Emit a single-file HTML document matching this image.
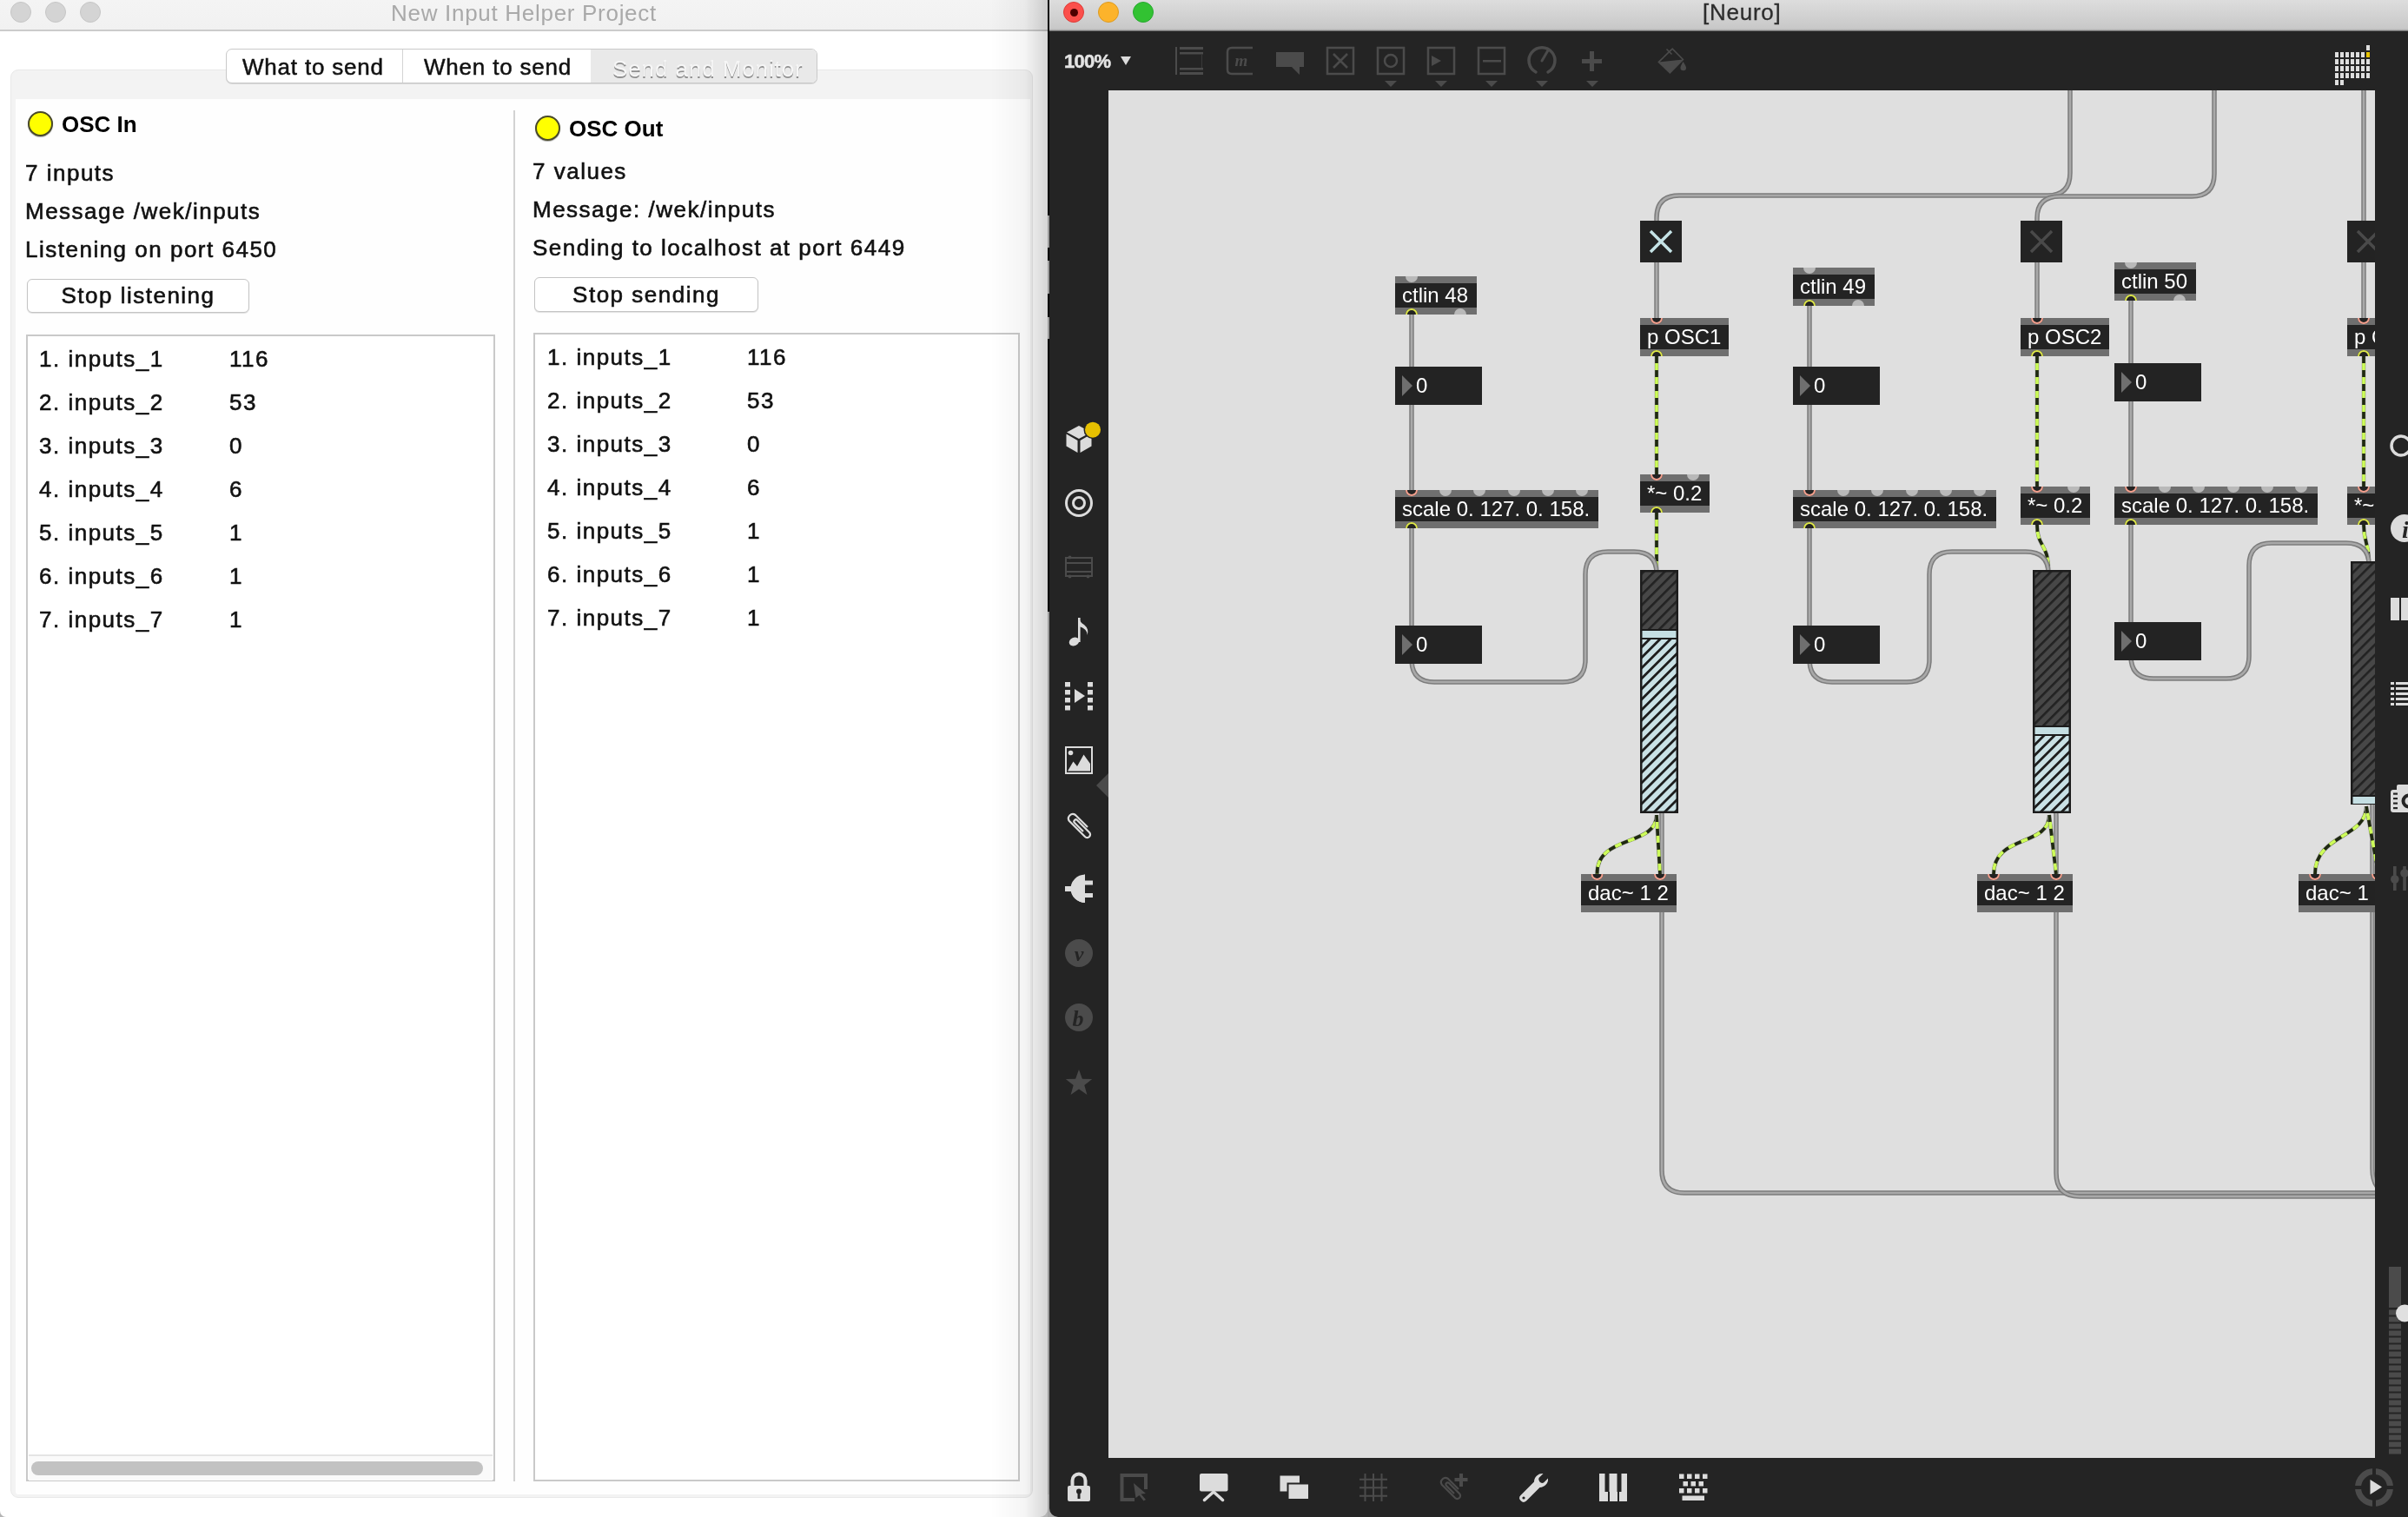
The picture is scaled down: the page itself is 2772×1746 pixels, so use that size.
<!DOCTYPE html><html><head><meta charset="utf-8"><style>
*{margin:0;padding:0;box-sizing:content-box}
html,body{width:2772px;height:1746px;overflow:hidden;background:#fff}
body{position:relative;font-family:"Liberation Sans",sans-serif}
svg,.lt{will-change:transform}
.lt{font-family:"Liberation Sans",sans-serif;white-space:pre}
.b{font-size:26px;line-height:40px;height:40px;color:#111;letter-spacing:1.5px;-webkit-text-stroke:0.6px #111}
</style></head><body>
<div style="position:absolute;left:0;top:0;width:1206px;height:1746px;background:#b4b4b4"></div><div style="position:absolute;left:0;top:0;width:1206px;height:1746px;background:#fff;overflow:hidden;border-bottom-right-radius:9px;border-bottom-left-radius:7px"><div style="position:absolute;left:0;top:0;width:1206px;height:34px;background:linear-gradient(#f4f4f4,#f1f1f1);border-bottom:2px solid #cbcbcb"></div><div style="position:absolute;left:12px;top:2px;width:22px;height:22px;border-radius:50%;background:#d4d4d4;border:1px solid #c6c6c6"></div><div style="position:absolute;left:52px;top:2px;width:22px;height:22px;border-radius:50%;background:#d4d4d4;border:1px solid #c6c6c6"></div><div style="position:absolute;left:92px;top:2px;width:22px;height:22px;border-radius:50%;background:#d4d4d4;border:1px solid #c6c6c6"></div><div class="lt" style="position:absolute;left:0;width:1206px;top:0;height:35px;line-height:30px;text-align:center;color:#a9a9a9;font-size:26px;letter-spacing:0.7px">New Input Helper Project</div><div style="position:absolute;left:12px;top:80px;width:1175px;height:1642px;border:1px solid #e8e8e8;border-radius:9px;background:#f3f3f3"></div><div style="position:absolute;left:18px;top:114px;width:1168px;height:1606px;background:#fefefe;border-bottom-left-radius:3px;border-bottom-right-radius:3px"></div><div style="position:absolute;left:260px;top:56px;width:679px;height:38px;border:1px solid #c9c9c9;border-radius:7px;background:#fff;box-shadow:0 1px 0 #d8d8d8;overflow:hidden"><div style="position:absolute;left:202px;top:0;width:1px;height:38px;background:#d4d4d4"></div><div style="position:absolute;left:419px;top:0;width:260px;height:38px;background:#e9e9e9"></div><div class="lt" style="position:absolute;left:18px;top:0;top:1px;line-height:38px;font-size:26px;color:#111;letter-spacing:0.8px;-webkit-text-stroke:0.5px #111">What to send</div><div class="lt" style="position:absolute;left:227px;top:0;top:1px;line-height:38px;font-size:26px;color:#111;letter-spacing:0.8px;-webkit-text-stroke:0.5px #111">When to send</div><div class="lt" style="position:absolute;left:444px;top:3px;line-height:38px;font-size:26px;color:#f6f6f6;letter-spacing:0.9px;text-shadow:0 1.5px 0.5px #8f8f8f">Send and Monitor</div></div><div style="position:absolute;left:591px;top:127px;width:2px;height:1578px;background:#d2d2d2"></div><div style="position:absolute;left:32px;top:128px;width:25px;height:25px;border-radius:50%;background:#ffff00;border:2px solid #4a4a2a;box-shadow:0 1px 1px rgba(0,0,0,0.3)"></div><div class="lt" style="position:absolute;left:71px;top:123px;height:40px;line-height:40px;font-size:26px;font-weight:bold;color:#000">OSC In</div><div class="lt b" style="position:absolute;left:29px;top:179px">7 inputs</div><div class="lt b" style="position:absolute;left:29px;top:223px">Message /wek/inputs</div><div class="lt b" style="position:absolute;left:29px;top:267px">Listening on port 6450</div><div style="position:absolute;left:31px;top:321px;width:254px;height:37px;border:1px solid #c4c4c4;border-radius:6px;background:#fff;box-shadow:0 1px 1px rgba(0,0,0,0.12)"></div><div class="lt b" style="position:absolute;left:31px;width:256px;text-align:center;top:320px">Stop listening</div><div style="position:absolute;left:30px;top:385px;width:535.5px;height:1316px;border:2px solid #c9c9c9;background:#fff"></div><div class="lt b" style="position:absolute;left:45px;top:393px">1. inputs_1</div><div class="lt b" style="position:absolute;left:264px;top:393px">116</div><div class="lt b" style="position:absolute;left:45px;top:443px">2. inputs_2</div><div class="lt b" style="position:absolute;left:264px;top:443px">53</div><div class="lt b" style="position:absolute;left:45px;top:493px">3. inputs_3</div><div class="lt b" style="position:absolute;left:264px;top:493px">0</div><div class="lt b" style="position:absolute;left:45px;top:543px">4. inputs_4</div><div class="lt b" style="position:absolute;left:264px;top:543px">6</div><div class="lt b" style="position:absolute;left:45px;top:593px">5. inputs_5</div><div class="lt b" style="position:absolute;left:264px;top:593px">1</div><div class="lt b" style="position:absolute;left:45px;top:643px">6. inputs_6</div><div class="lt b" style="position:absolute;left:264px;top:643px">1</div><div class="lt b" style="position:absolute;left:45px;top:693px">7. inputs_7</div><div class="lt b" style="position:absolute;left:264px;top:693px">1</div><div style="position:absolute;left:33px;top:1674px;width:533.5px;height:28px;background:#fafafa;border-top:2px solid #e4e4e4"></div><div style="position:absolute;left:36px;top:1682px;width:520px;height:16px;border-radius:8px;background:#c2c2c2"></div><div style="position:absolute;left:616px;top:133px;width:25px;height:25px;border-radius:50%;background:#ffff00;border:2px solid #4a4a2a;box-shadow:0 1px 1px rgba(0,0,0,0.3)"></div><div class="lt" style="position:absolute;left:655px;top:128px;height:40px;line-height:40px;font-size:26px;font-weight:bold;color:#000">OSC Out</div><div class="lt b" style="position:absolute;left:613px;top:177px">7 values</div><div class="lt b" style="position:absolute;left:613px;top:221px">Message: /wek/inputs</div><div class="lt b" style="position:absolute;left:613px;top:265px">Sending to localhost at port 6449</div><div style="position:absolute;left:615px;top:319px;width:256px;height:38px;border:1px solid #c4c4c4;border-radius:6px;background:#fff;box-shadow:0 1px 1px rgba(0,0,0,0.12)"></div><div class="lt b" style="position:absolute;left:615px;width:258px;text-align:center;top:319px">Stop sending</div><div style="position:absolute;left:614px;top:382.5px;width:556px;height:1318.5px;border:2px solid #c9c9c9;background:#fff"></div><div class="lt b" style="position:absolute;left:630px;top:391px">1. inputs_1</div><div class="lt b" style="position:absolute;left:860px;top:391px">116</div><div class="lt b" style="position:absolute;left:630px;top:441px">2. inputs_2</div><div class="lt b" style="position:absolute;left:860px;top:441px">53</div><div class="lt b" style="position:absolute;left:630px;top:491px">3. inputs_3</div><div class="lt b" style="position:absolute;left:860px;top:491px">0</div><div class="lt b" style="position:absolute;left:630px;top:541px">4. inputs_4</div><div class="lt b" style="position:absolute;left:860px;top:541px">6</div><div class="lt b" style="position:absolute;left:630px;top:591px">5. inputs_5</div><div class="lt b" style="position:absolute;left:860px;top:591px">1</div><div class="lt b" style="position:absolute;left:630px;top:641px">6. inputs_6</div><div class="lt b" style="position:absolute;left:860px;top:641px">1</div><div class="lt b" style="position:absolute;left:630px;top:691px">7. inputs_7</div><div class="lt b" style="position:absolute;left:860px;top:691px">1</div><div style="position:absolute;left:1140px;top:0;width:66px;height:1746px;background:linear-gradient(90deg,rgba(0,0,0,0),rgba(0,0,0,0.04) 60%,rgba(0,0,0,0.16))"></div></div>
<div style="position:absolute;left:1206px;top:0;width:2px;height:1746px;background:linear-gradient(#050505 248px,#9c9c9c 248px,#9c9c9c 285px,#050505 285px,#050505 300px,#9c9c9c 300px,#9c9c9c 338px,#050505 338px,#050505 365px,#9c9c9c 365px,#9c9c9c 390px,#050505 390px,#050505 704px,#9c9c9c 704px)"></div><div style="position:absolute;left:1208px;top:0;width:1564px;height:36px;background:linear-gradient(#dddddd,#c8c8c8 33px,#a6a6a6 35px,#333 36px)"></div><div style="position:absolute;left:1224px;top:2px;width:22px;height:22px;border-radius:50%;background:#fb4f4b;border:1px solid #de3b37"></div><div style="position:absolute;left:1264px;top:2px;width:22px;height:22px;border-radius:50%;background:#fcb32b;border:1px solid #dd9a1f"></div><div style="position:absolute;left:1304px;top:2px;width:22px;height:22px;border-radius:50%;background:#32c232;border:1px solid #26a92f"></div><div style="position:absolute;left:1231.5px;top:9.5px;width:9px;height:9px;border-radius:50%;background:#4d0000"></div><div class="lt" style="position:absolute;left:1960px;top:0;height:36px;line-height:29px;color:#2d2d2d;font-size:26px;letter-spacing:0.75px;-webkit-text-stroke:0.3px #2d2d2d">[Neuro]</div><div style="position:absolute;left:1206px;top:1720px;width:30px;height:26px;background:#a8a8a8"></div><div style="position:absolute;left:1208px;top:36px;width:1564px;height:1710px;background:#242424;border-bottom-left-radius:10px"></div><svg style="position:absolute;left:0;top:0" width="2772" height="1746" viewBox="0 0 2772 1746"><defs><clipPath id="cc"><rect x="1276" y="104" width="1458" height="1574"/></clipPath><pattern id="hatchD" width="8.5" height="14" patternUnits="userSpaceOnUse" patternTransform="rotate(45)"><rect width="14" height="14" fill="#474747"/><rect x="0" y="0" width="2.6" height="14" fill="#222"/></pattern><pattern id="hatchL" width="8.5" height="14" patternUnits="userSpaceOnUse" patternTransform="rotate(45)"><rect width="14" height="14" fill="#c9e1e5"/><rect x="0" y="0" width="2.8" height="14" fill="#1c1c1c"/></pattern></defs><g clip-path="url(#cc)"><rect x="1276" y="104" width="1458" height="1574" fill="#dfdfdf"/><path d="M1625,362 L1625,422" fill="none" stroke="#7c7c7c" stroke-width="5.5"/><path d="M1625,362 L1625,422" fill="none" stroke="#a9a9a9" stroke-width="2.5"/><path d="M1625,466 L1625,564" fill="none" stroke="#7c7c7c" stroke-width="5.5"/><path d="M1625,466 L1625,564" fill="none" stroke="#a9a9a9" stroke-width="2.5"/><path d="M1625,608 L1625,720" fill="none" stroke="#7c7c7c" stroke-width="5.5"/><path d="M1625,608 L1625,720" fill="none" stroke="#a9a9a9" stroke-width="2.5"/><path d="M1907,660 L1913,940 L1913,1347 Q1913,1373 1939,1373 L2740,1373" fill="none" stroke="#7c7c7c" stroke-width="5.5"/><path d="M1907,660 L1913,940 L1913,1347 Q1913,1373 1939,1373 L2740,1373" fill="none" stroke="#a9a9a9" stroke-width="2.5"/><path d="M1907,254 L1907,251 Q1907,225 1933,225 L2357,225 Q2383,225 2383,199 L2383,100" fill="none" stroke="#7c7c7c" stroke-width="5.5"/><path d="M1907,254 L1907,251 Q1907,225 1933,225 L2357,225 Q2383,225 2383,199 L2383,100" fill="none" stroke="#a9a9a9" stroke-width="2.5"/><path d="M1907,302 L1907,366" fill="none" stroke="#7c7c7c" stroke-width="5.5"/><path d="M1907,302 L1907,366" fill="none" stroke="#a9a9a9" stroke-width="2.5"/><path d="M2083,352 L2083,422" fill="none" stroke="#7c7c7c" stroke-width="5.5"/><path d="M2083,352 L2083,422" fill="none" stroke="#a9a9a9" stroke-width="2.5"/><path d="M2083,466 L2083,564" fill="none" stroke="#7c7c7c" stroke-width="5.5"/><path d="M2083,466 L2083,564" fill="none" stroke="#a9a9a9" stroke-width="2.5"/><path d="M2083,608 L2083,720" fill="none" stroke="#7c7c7c" stroke-width="5.5"/><path d="M2083,608 L2083,720" fill="none" stroke="#a9a9a9" stroke-width="2.5"/><path d="M2358,660 L2367,940 L2367,1350 Q2367,1377 2394,1377 L2740,1377" fill="none" stroke="#7c7c7c" stroke-width="5.5"/><path d="M2358,660 L2367,940 L2367,1350 Q2367,1377 2394,1377 L2740,1377" fill="none" stroke="#a9a9a9" stroke-width="2.5"/><path d="M2345,254 L2345,251 Q2345,226 2371,226 L2523,226 Q2549,226 2549,200 L2549,100" fill="none" stroke="#7c7c7c" stroke-width="5.5"/><path d="M2345,254 L2345,251 Q2345,226 2371,226 L2523,226 Q2549,226 2549,200 L2549,100" fill="none" stroke="#a9a9a9" stroke-width="2.5"/><path d="M2345,302 L2345,366" fill="none" stroke="#7c7c7c" stroke-width="5.5"/><path d="M2345,302 L2345,366" fill="none" stroke="#a9a9a9" stroke-width="2.5"/><path d="M2453,346 L2453,418" fill="none" stroke="#7c7c7c" stroke-width="5.5"/><path d="M2453,346 L2453,418" fill="none" stroke="#a9a9a9" stroke-width="2.5"/><path d="M2453,462 L2453,560" fill="none" stroke="#7c7c7c" stroke-width="5.5"/><path d="M2453,462 L2453,560" fill="none" stroke="#a9a9a9" stroke-width="2.5"/><path d="M2453,604 L2453,716" fill="none" stroke="#7c7c7c" stroke-width="5.5"/><path d="M2453,604 L2453,716" fill="none" stroke="#a9a9a9" stroke-width="2.5"/><path d="M2727,650 L2731,930 L2731,1345 Q2731,1375 2760,1375" fill="none" stroke="#7c7c7c" stroke-width="5.5"/><path d="M2727,650 L2731,930 L2731,1345 Q2731,1375 2760,1375" fill="none" stroke="#a9a9a9" stroke-width="2.5"/><path d="M2721,254 L2721,100" fill="none" stroke="#7c7c7c" stroke-width="5.5"/><path d="M2721,254 L2721,100" fill="none" stroke="#a9a9a9" stroke-width="2.5"/><path d="M2721,302 L2721,366" fill="none" stroke="#7c7c7c" stroke-width="5.5"/><path d="M2721,302 L2721,366" fill="none" stroke="#a9a9a9" stroke-width="2.5"/><path d="M1907,410 L1907,546" fill="none" stroke="#b0b0b0" stroke-width="4.8"/><path d="M1907,410 L1907,546" fill="none" stroke="#1f2910" stroke-width="3.7"/><path d="M1907,410 L1907,546" fill="none" stroke="#cdfc5a" stroke-width="3.7" stroke-dasharray="8 8" stroke-dashoffset="8"/><path d="M1907,590 L1907,656" fill="none" stroke="#b0b0b0" stroke-width="4.8"/><path d="M1907,590 L1907,656" fill="none" stroke="#1f2910" stroke-width="3.7"/><path d="M1907,590 L1907,656" fill="none" stroke="#cdfc5a" stroke-width="3.7" stroke-dasharray="8 8" stroke-dashoffset="8"/><path d="M1907,938 C1907,975 1838,960 1838.5,1006" fill="none" stroke="#b0b0b0" stroke-width="4.8"/><path d="M1907,938 C1907,975 1838,960 1838.5,1006" fill="none" stroke="#1f2910" stroke-width="3.7"/><path d="M1907,938 C1907,975 1838,960 1838.5,1006" fill="none" stroke="#cdfc5a" stroke-width="3.7" stroke-dasharray="8 8" stroke-dashoffset="8"/><path d="M1907,938 L1911,1006" fill="none" stroke="#b0b0b0" stroke-width="4.8"/><path d="M1907,938 L1911,1006" fill="none" stroke="#1f2910" stroke-width="3.7"/><path d="M1907,938 L1911,1006" fill="none" stroke="#cdfc5a" stroke-width="3.7" stroke-dasharray="8 8" stroke-dashoffset="8"/><path d="M2345,410 L2345,560" fill="none" stroke="#b0b0b0" stroke-width="4.8"/><path d="M2345,410 L2345,560" fill="none" stroke="#1f2910" stroke-width="3.7"/><path d="M2345,410 L2345,560" fill="none" stroke="#cdfc5a" stroke-width="3.7" stroke-dasharray="8 8" stroke-dashoffset="8"/><path d="M2345,604 C2345,630 2358,625 2358,656" fill="none" stroke="#b0b0b0" stroke-width="4.8"/><path d="M2345,604 C2345,630 2358,625 2358,656" fill="none" stroke="#1f2910" stroke-width="3.7"/><path d="M2345,604 C2345,630 2358,625 2358,656" fill="none" stroke="#cdfc5a" stroke-width="3.7" stroke-dasharray="8 8" stroke-dashoffset="8"/><path d="M2359,938 C2359,975 2295,960 2295,1006" fill="none" stroke="#b0b0b0" stroke-width="4.8"/><path d="M2359,938 C2359,975 2295,960 2295,1006" fill="none" stroke="#1f2910" stroke-width="3.7"/><path d="M2359,938 C2359,975 2295,960 2295,1006" fill="none" stroke="#cdfc5a" stroke-width="3.7" stroke-dasharray="8 8" stroke-dashoffset="8"/><path d="M2359,938 L2367,1006" fill="none" stroke="#b0b0b0" stroke-width="4.8"/><path d="M2359,938 L2367,1006" fill="none" stroke="#1f2910" stroke-width="3.7"/><path d="M2359,938 L2367,1006" fill="none" stroke="#cdfc5a" stroke-width="3.7" stroke-dasharray="8 8" stroke-dashoffset="8"/><path d="M2721,410 L2721,560" fill="none" stroke="#b0b0b0" stroke-width="4.8"/><path d="M2721,410 L2721,560" fill="none" stroke="#1f2910" stroke-width="3.7"/><path d="M2721,410 L2721,560" fill="none" stroke="#cdfc5a" stroke-width="3.7" stroke-dasharray="8 8" stroke-dashoffset="8"/><path d="M2721,604 C2721,625 2727,625 2727,646" fill="none" stroke="#b0b0b0" stroke-width="4.8"/><path d="M2721,604 C2721,625 2727,625 2727,646" fill="none" stroke="#1f2910" stroke-width="3.7"/><path d="M2721,604 C2721,625 2727,625 2727,646" fill="none" stroke="#cdfc5a" stroke-width="3.7" stroke-dasharray="8 8" stroke-dashoffset="8"/><path d="M2724,928 C2724,965 2665,960 2665,1006" fill="none" stroke="#b0b0b0" stroke-width="4.8"/><path d="M2724,928 C2724,965 2665,960 2665,1006" fill="none" stroke="#1f2910" stroke-width="3.7"/><path d="M2724,928 C2724,965 2665,960 2665,1006" fill="none" stroke="#cdfc5a" stroke-width="3.7" stroke-dasharray="8 8" stroke-dashoffset="8"/><path d="M2724,928 L2738,1006" fill="none" stroke="#b0b0b0" stroke-width="4.8"/><path d="M2724,928 L2738,1006" fill="none" stroke="#1f2910" stroke-width="3.7"/><path d="M2724,928 L2738,1006" fill="none" stroke="#cdfc5a" stroke-width="3.7" stroke-dasharray="8 8" stroke-dashoffset="8"/><path d="M1625,764 L1625,759 Q1625,785 1651,785 L1799,785 Q1825,785 1825,759 L1825,661 Q1825,635 1851,635 L1881,635 Q1907,635 1907,660 L1907,660" fill="none" stroke="#7c7c7c" stroke-width="5.5"/><path d="M1625,764 L1625,759 Q1625,785 1651,785 L1799,785 Q1825,785 1825,759 L1825,661 Q1825,635 1851,635 L1881,635 Q1907,635 1907,660 L1907,660" fill="none" stroke="#a9a9a9" stroke-width="2.5"/><path d="M2083,764 L2083,759 Q2083,785 2109,785 L2195,785 Q2221,785 2221,759 L2221,661 Q2221,635 2247,635 L2332,635 Q2358,635 2358,660 L2358,660" fill="none" stroke="#7c7c7c" stroke-width="5.5"/><path d="M2083,764 L2083,759 Q2083,785 2109,785 L2195,785 Q2221,785 2221,759 L2221,661 Q2221,635 2247,635 L2332,635 Q2358,635 2358,660 L2358,660" fill="none" stroke="#a9a9a9" stroke-width="2.5"/><path d="M2453,760 L2453,755 Q2453,781 2479,781 L2563,781 Q2589,781 2589,755 L2589,651 Q2589,625 2615,625 L2701,625 Q2727,625 2727,650 L2727,650" fill="none" stroke="#7c7c7c" stroke-width="5.5"/><path d="M2453,760 L2453,755 Q2453,781 2479,781 L2563,781 Q2589,781 2589,755 L2589,651 Q2589,625 2615,625 L2701,625 Q2727,625 2727,650 L2727,650" fill="none" stroke="#a9a9a9" stroke-width="2.5"/><rect x="1606" y="318" width="94" height="44" fill="#6f6f6f"/><rect x="1606" y="326" width="94" height="28" fill="#232323"/><text x="1614" y="348" fill="#fff" font-size="24" font-family="Liberation Sans">ctlin 48</text><path d="M1618,318 A7,7 0 0 0 1632,318 Z" fill="#b9b9b9"/><path d="M1618,362 A7,7 0 0 1 1632,362 Z" fill="#232323"/><path d="M1619,362 A6,6 0 0 1 1631,362" fill="none" stroke="#dde64a" stroke-width="2"/><path d="M1674,362 A7,7 0 0 1 1688,362 Z" fill="#b9b9b9"/><rect x="1606" y="422" width="100" height="44" fill="#232323"/><path d="M1614,432 L1626,444 L1614,456 Z" fill="#6f6f6f"/><text x="1630" y="452" fill="#fff" font-size="24" font-family="Liberation Sans">0</text><rect x="1606" y="564" width="234" height="44" fill="#6f6f6f"/><rect x="1606" y="572" width="234" height="28" fill="#232323"/><text x="1614" y="594" fill="#fff" font-size="24" font-family="Liberation Sans">scale 0. 127. 0. 158.</text><path d="M1618,564 A7,7 0 0 0 1632,564 Z" fill="#232323"/><path d="M1619,564 A6,6 0 0 0 1631,564" fill="none" stroke="#f3a08e" stroke-width="2"/><path d="M1657,564 A7,7 0 0 0 1671,564 Z" fill="#b9b9b9"/><path d="M1696,564 A7,7 0 0 0 1710,564 Z" fill="#b9b9b9"/><path d="M1736,564 A7,7 0 0 0 1750,564 Z" fill="#b9b9b9"/><path d="M1775,564 A7,7 0 0 0 1789,564 Z" fill="#b9b9b9"/><path d="M1814,564 A7,7 0 0 0 1828,564 Z" fill="#b9b9b9"/><path d="M1618,608 A7,7 0 0 1 1632,608 Z" fill="#232323"/><path d="M1619,608 A6,6 0 0 1 1631,608" fill="none" stroke="#dde64a" stroke-width="2"/><rect x="1606" y="720" width="100" height="44" fill="#232323"/><path d="M1614,730 L1626,742 L1614,754 Z" fill="#6f6f6f"/><text x="1630" y="750" fill="#fff" font-size="24" font-family="Liberation Sans">0</text><rect x="1888" y="254" width="48" height="48" fill="#232323"/><path d="M1900,266 L1924,290 M1924,266 L1900,290" stroke="#c5e3e6" stroke-width="3.5"/><rect x="1888" y="366" width="102" height="44" fill="#6f6f6f"/><rect x="1888" y="374" width="102" height="28" fill="#232323"/><text x="1896" y="396" fill="#fff" font-size="24" font-family="Liberation Sans">p OSC1</text><path d="M1900,366 A7,7 0 0 0 1914,366 Z" fill="#232323"/><path d="M1901,366 A6,6 0 0 0 1913,366" fill="none" stroke="#f3a08e" stroke-width="2"/><path d="M1900,410 A7,7 0 0 1 1914,410 Z" fill="#232323"/><path d="M1901,410 A6,6 0 0 1 1913,410" fill="none" stroke="#dde64a" stroke-width="2"/><rect x="1888" y="546" width="80" height="44" fill="#6f6f6f"/><rect x="1888" y="554" width="80" height="28" fill="#232323"/><text x="1896" y="576" fill="#fff" font-size="24" font-family="Liberation Sans">*~ 0.2</text><path d="M1900,546 A7,7 0 0 0 1914,546 Z" fill="#232323"/><path d="M1901,546 A6,6 0 0 0 1913,546" fill="none" stroke="#f3a08e" stroke-width="2"/><path d="M1942,546 A7,7 0 0 0 1956,546 Z" fill="#b9b9b9"/><path d="M1900,590 A7,7 0 0 1 1914,590 Z" fill="#232323"/><path d="M1901,590 A6,6 0 0 1 1913,590" fill="none" stroke="#dde64a" stroke-width="2"/><rect x="1888" y="656" width="44" height="280" fill="#1c1c1c"/><rect x="1890.5" y="658.5" width="39" height="65.5" fill="url(#hatchD)"/><rect x="1890.5" y="726" width="39" height="8" fill="#c5dfe3"/><rect x="1890.5" y="736" width="39" height="197.5" fill="url(#hatchL)"/><rect x="1820" y="1006" width="110" height="44" fill="#6f6f6f"/><rect x="1820" y="1014" width="110" height="28" fill="#232323"/><text x="1828" y="1036" fill="#fff" font-size="24" font-family="Liberation Sans">dac~ 1 2</text><path d="M1831.5,1006 A7,7 0 0 0 1845.5,1006 Z" fill="#232323"/><path d="M1832.5,1006 A6,6 0 0 0 1844.5,1006" fill="none" stroke="#f3a08e" stroke-width="2"/><path d="M1904,1006 A7,7 0 0 0 1918,1006 Z" fill="#232323"/><path d="M1905,1006 A6,6 0 0 0 1917,1006" fill="none" stroke="#f3a08e" stroke-width="2"/><rect x="2064" y="308" width="94" height="44" fill="#6f6f6f"/><rect x="2064" y="316" width="94" height="28" fill="#232323"/><text x="2072" y="338" fill="#fff" font-size="24" font-family="Liberation Sans">ctlin 49</text><path d="M2076,308 A7,7 0 0 0 2090,308 Z" fill="#b9b9b9"/><path d="M2076,352 A7,7 0 0 1 2090,352 Z" fill="#232323"/><path d="M2077,352 A6,6 0 0 1 2089,352" fill="none" stroke="#dde64a" stroke-width="2"/><path d="M2132,352 A7,7 0 0 1 2146,352 Z" fill="#b9b9b9"/><rect x="2064" y="422" width="100" height="44" fill="#232323"/><path d="M2072,432 L2084,444 L2072,456 Z" fill="#6f6f6f"/><text x="2088" y="452" fill="#fff" font-size="24" font-family="Liberation Sans">0</text><rect x="2064" y="564" width="234" height="44" fill="#6f6f6f"/><rect x="2064" y="572" width="234" height="28" fill="#232323"/><text x="2072" y="594" fill="#fff" font-size="24" font-family="Liberation Sans">scale 0. 127. 0. 158.</text><path d="M2076,564 A7,7 0 0 0 2090,564 Z" fill="#232323"/><path d="M2077,564 A6,6 0 0 0 2089,564" fill="none" stroke="#f3a08e" stroke-width="2"/><path d="M2115,564 A7,7 0 0 0 2129,564 Z" fill="#b9b9b9"/><path d="M2154,564 A7,7 0 0 0 2168,564 Z" fill="#b9b9b9"/><path d="M2194,564 A7,7 0 0 0 2208,564 Z" fill="#b9b9b9"/><path d="M2233,564 A7,7 0 0 0 2247,564 Z" fill="#b9b9b9"/><path d="M2272,564 A7,7 0 0 0 2286,564 Z" fill="#b9b9b9"/><path d="M2076,608 A7,7 0 0 1 2090,608 Z" fill="#232323"/><path d="M2077,608 A6,6 0 0 1 2089,608" fill="none" stroke="#dde64a" stroke-width="2"/><rect x="2064" y="720" width="100" height="44" fill="#232323"/><path d="M2072,730 L2084,742 L2072,754 Z" fill="#6f6f6f"/><text x="2088" y="750" fill="#fff" font-size="24" font-family="Liberation Sans">0</text><rect x="2326" y="254" width="48" height="48" fill="#232323"/><path d="M2338,266 L2362,290 M2362,266 L2338,290" stroke="#4a4a4a" stroke-width="3.5"/><rect x="2326" y="366" width="102" height="44" fill="#6f6f6f"/><rect x="2326" y="374" width="102" height="28" fill="#232323"/><text x="2334" y="396" fill="#fff" font-size="24" font-family="Liberation Sans">p OSC2</text><path d="M2338,366 A7,7 0 0 0 2352,366 Z" fill="#232323"/><path d="M2339,366 A6,6 0 0 0 2351,366" fill="none" stroke="#f3a08e" stroke-width="2"/><path d="M2338,410 A7,7 0 0 1 2352,410 Z" fill="#232323"/><path d="M2339,410 A6,6 0 0 1 2351,410" fill="none" stroke="#dde64a" stroke-width="2"/><rect x="2326" y="560" width="80" height="44" fill="#6f6f6f"/><rect x="2326" y="568" width="80" height="28" fill="#232323"/><text x="2334" y="590" fill="#fff" font-size="24" font-family="Liberation Sans">*~ 0.2</text><path d="M2338,560 A7,7 0 0 0 2352,560 Z" fill="#232323"/><path d="M2339,560 A6,6 0 0 0 2351,560" fill="none" stroke="#f3a08e" stroke-width="2"/><path d="M2380,560 A7,7 0 0 0 2394,560 Z" fill="#b9b9b9"/><path d="M2338,604 A7,7 0 0 1 2352,604 Z" fill="#232323"/><path d="M2339,604 A6,6 0 0 1 2351,604" fill="none" stroke="#dde64a" stroke-width="2"/><rect x="2340" y="656" width="44" height="280" fill="#1c1c1c"/><rect x="2342.5" y="658.5" width="39" height="176.5" fill="url(#hatchD)"/><rect x="2342.5" y="837" width="39" height="8" fill="#c5dfe3"/><rect x="2342.5" y="847" width="39" height="86.5" fill="url(#hatchL)"/><rect x="2276" y="1006" width="110" height="44" fill="#6f6f6f"/><rect x="2276" y="1014" width="110" height="28" fill="#232323"/><text x="2284" y="1036" fill="#fff" font-size="24" font-family="Liberation Sans">dac~ 1 2</text><path d="M2288,1006 A7,7 0 0 0 2302,1006 Z" fill="#232323"/><path d="M2289,1006 A6,6 0 0 0 2301,1006" fill="none" stroke="#f3a08e" stroke-width="2"/><path d="M2360,1006 A7,7 0 0 0 2374,1006 Z" fill="#232323"/><path d="M2361,1006 A6,6 0 0 0 2373,1006" fill="none" stroke="#f3a08e" stroke-width="2"/><rect x="2434" y="302" width="94" height="44" fill="#6f6f6f"/><rect x="2434" y="310" width="94" height="28" fill="#232323"/><text x="2442" y="332" fill="#fff" font-size="24" font-family="Liberation Sans">ctlin 50</text><path d="M2446,302 A7,7 0 0 0 2460,302 Z" fill="#b9b9b9"/><path d="M2446,346 A7,7 0 0 1 2460,346 Z" fill="#232323"/><path d="M2447,346 A6,6 0 0 1 2459,346" fill="none" stroke="#dde64a" stroke-width="2"/><path d="M2502,346 A7,7 0 0 1 2516,346 Z" fill="#b9b9b9"/><rect x="2434" y="418" width="100" height="44" fill="#232323"/><path d="M2442,428 L2454,440 L2442,452 Z" fill="#6f6f6f"/><text x="2458" y="448" fill="#fff" font-size="24" font-family="Liberation Sans">0</text><rect x="2434" y="560" width="234" height="44" fill="#6f6f6f"/><rect x="2434" y="568" width="234" height="28" fill="#232323"/><text x="2442" y="590" fill="#fff" font-size="24" font-family="Liberation Sans">scale 0. 127. 0. 158.</text><path d="M2446,560 A7,7 0 0 0 2460,560 Z" fill="#232323"/><path d="M2447,560 A6,6 0 0 0 2459,560" fill="none" stroke="#f3a08e" stroke-width="2"/><path d="M2485,560 A7,7 0 0 0 2499,560 Z" fill="#b9b9b9"/><path d="M2524,560 A7,7 0 0 0 2538,560 Z" fill="#b9b9b9"/><path d="M2564,560 A7,7 0 0 0 2578,560 Z" fill="#b9b9b9"/><path d="M2603,560 A7,7 0 0 0 2617,560 Z" fill="#b9b9b9"/><path d="M2642,560 A7,7 0 0 0 2656,560 Z" fill="#b9b9b9"/><path d="M2446,604 A7,7 0 0 1 2460,604 Z" fill="#232323"/><path d="M2447,604 A6,6 0 0 1 2459,604" fill="none" stroke="#dde64a" stroke-width="2"/><rect x="2434" y="716" width="100" height="44" fill="#232323"/><path d="M2442,726 L2454,738 L2442,750 Z" fill="#6f6f6f"/><text x="2458" y="746" fill="#fff" font-size="24" font-family="Liberation Sans">0</text><rect x="2702" y="254" width="48" height="48" fill="#232323"/><path d="M2714,266 L2738,290 M2738,266 L2714,290" stroke="#4a4a4a" stroke-width="3.5"/><rect x="2702" y="366" width="102" height="44" fill="#6f6f6f"/><rect x="2702" y="374" width="102" height="28" fill="#232323"/><text x="2710" y="396" fill="#fff" font-size="24" font-family="Liberation Sans">p OSC3</text><path d="M2714,366 A7,7 0 0 0 2728,366 Z" fill="#232323"/><path d="M2715,366 A6,6 0 0 0 2727,366" fill="none" stroke="#f3a08e" stroke-width="2"/><path d="M2714,410 A7,7 0 0 1 2728,410 Z" fill="#232323"/><path d="M2715,410 A6,6 0 0 1 2727,410" fill="none" stroke="#dde64a" stroke-width="2"/><rect x="2702" y="560" width="80" height="44" fill="#6f6f6f"/><rect x="2702" y="568" width="80" height="28" fill="#232323"/><text x="2710" y="590" fill="#fff" font-size="24" font-family="Liberation Sans">*~ 0.2</text><path d="M2714,560 A7,7 0 0 0 2728,560 Z" fill="#232323"/><path d="M2715,560 A6,6 0 0 0 2727,560" fill="none" stroke="#f3a08e" stroke-width="2"/><path d="M2756,560 A7,7 0 0 0 2770,560 Z" fill="#b9b9b9"/><path d="M2714,604 A7,7 0 0 1 2728,604 Z" fill="#232323"/><path d="M2715,604 A6,6 0 0 1 2727,604" fill="none" stroke="#dde64a" stroke-width="2"/><rect x="2706" y="646" width="44" height="280" fill="#1c1c1c"/><rect x="2708.5" y="648.5" width="39" height="266.5" fill="url(#hatchD)"/><rect x="2708.5" y="917" width="39" height="8" fill="#c5dfe3"/><rect x="2708.5" y="927" width="39" height="-3.5" fill="url(#hatchL)"/><rect x="2646" y="1006" width="110" height="44" fill="#6f6f6f"/><rect x="2646" y="1014" width="110" height="28" fill="#232323"/><text x="2654" y="1036" fill="#fff" font-size="24" font-family="Liberation Sans">dac~ 1 2</text><path d="M2658,1006 A7,7 0 0 0 2672,1006 Z" fill="#232323"/><path d="M2659,1006 A6,6 0 0 0 2671,1006" fill="none" stroke="#f3a08e" stroke-width="2"/><path d="M2730,1006 A7,7 0 0 0 2744,1006 Z" fill="#232323"/><path d="M2731,1006 A6,6 0 0 0 2743,1006" fill="none" stroke="#f3a08e" stroke-width="2"/></g></svg><svg style="position:absolute;left:0;top:0" width="2772" height="1746" viewBox="0 0 2772 1746"><text x="1225" y="77.5" fill="#e4e4e4" font-size="22" font-weight="bold" letter-spacing="-0.7" stroke="#e4e4e4" stroke-width="0.5" font-family="Liberation Sans">100%</text><path d="M1290,65 L1302,65 L1296,75 Z" fill="#dcdcdc"/><g fill="#4b4b4b"><rect x="1353" y="54" width="2" height="32"/><rect x="1358" y="54" width="27" height="3"/><rect x="1358" y="60" width="27" height="2.5"/><rect x="1358" y="78" width="27" height="2.5"/><rect x="1358" y="83" width="27" height="3"/><rect x="1383" y="62" width="1" height="16" fill="#383838"/></g><path d="M1442,55 L1418,55 Q1413,55 1413,60 L1413,80 Q1413,85 1418,85 L1442,85" fill="none" stroke="#4b4b4b" stroke-width="2.5"/><text x="1421.5" y="75.5" fill="#4b4b4b" font-size="19" font-style="italic" font-weight="bold" font-family="Liberation Serif">m</text><path d="M1469,60 L1501,60 L1501,77 L1496,77 L1496,86 L1487,77 L1469,77 Z" fill="#4b4b4b"/><rect x="1528" y="55" width="30" height="30" fill="none" stroke="#4b4b4b" stroke-width="2.5"/><path d="M1535,62 L1551,78 M1551,62 L1535,78" stroke="#4b4b4b" stroke-width="2.5"/><rect x="1586" y="55" width="30" height="30" fill="none" stroke="#4b4b4b" stroke-width="2.5"/><circle cx="1601" cy="70" r="7" fill="none" stroke="#4b4b4b" stroke-width="2.5"/><rect x="1644" y="55" width="30" height="30" fill="none" stroke="#4b4b4b" stroke-width="2.5"/><path d="M1648,64 L1659,70 L1648,76 Z" fill="#4b4b4b"/><rect x="1702" y="55" width="30" height="30" fill="none" stroke="#4b4b4b" stroke-width="2.5"/><rect x="1707" y="69" width="21" height="2.5" fill="#4b4b4b"/><path d="M1768,83 A15,15 0 1 1 1782,83" fill="none" stroke="#4b4b4b" stroke-width="3.5" stroke-linecap="round"/><path d="M1775,70 L1782,58" stroke="#4b4b4b" stroke-width="3" stroke-linecap="round"/><rect x="1821" y="68" width="23" height="5" fill="#4b4b4b"/><rect x="1830" y="59" width="5" height="23" fill="#4b4b4b"/><path d="M1594,93 L1608,93 L1601,100 Z" fill="#4b4b4b"/><path d="M1652,93 L1666,93 L1659,100 Z" fill="#4b4b4b"/><path d="M1710,93 L1724,93 L1717,100 Z" fill="#4b4b4b"/><path d="M1768,93 L1782,93 L1775,100 Z" fill="#4b4b4b"/><path d="M1826,93 L1840,93 L1833,100 Z" fill="#4b4b4b"/><path d="M1909.4,71.4 L1925.2,56.2 L1937.4,68.5 L1922.4,83.9 Z" fill="none" stroke="#4b4b4b" stroke-width="1.6"/><path d="M1909.4,71.4 L1937.4,68.5 L1922.4,83.9 Z" fill="#4b4b4b"/><path d="M1918.5,56.5 L1924.5,62.5" stroke="#4b4b4b" stroke-width="1.6"/><path d="M1937.5,71 Q1941,76 1941,78 A3.2,3.2 0 0 1 1934.5,78 Q1934.5,76 1937.5,71 Z" fill="#4b4b4b"/><rect x="2688" y="60" width="4" height="6" fill="#dedede"/><rect x="2694" y="60" width="4" height="6" fill="#dedede"/><rect x="2700" y="60" width="4" height="6" fill="#dedede"/><rect x="2706" y="60" width="4" height="6" fill="#dedede"/><rect x="2712" y="60" width="4" height="6" fill="#dedede"/><rect x="2718" y="60" width="4" height="6" fill="#dedede"/><rect x="2724" y="60" width="4" height="6" fill="#e6c200"/><rect x="2688" y="68" width="4" height="6" fill="#dedede"/><rect x="2694" y="68" width="4" height="6" fill="#dedede"/><rect x="2700" y="68" width="4" height="6" fill="#dedede"/><rect x="2706" y="68" width="4" height="6" fill="#dedede"/><rect x="2712" y="68" width="4" height="6" fill="#dedede"/><rect x="2718" y="68" width="4" height="6" fill="#dedede"/><rect x="2724" y="68" width="4" height="6" fill="#dedede"/><rect x="2688" y="76" width="4" height="6" fill="#dedede"/><rect x="2694" y="76" width="4" height="6" fill="#dedede"/><rect x="2700" y="76" width="4" height="6" fill="#dedede"/><rect x="2706" y="76" width="4" height="6" fill="#dedede"/><rect x="2712" y="76" width="4" height="6" fill="#dedede"/><rect x="2718" y="76" width="4" height="6" fill="#dedede"/><rect x="2724" y="76" width="4" height="6" fill="#dedede"/><rect x="2688" y="84" width="4" height="6" fill="#dedede"/><rect x="2694" y="84" width="4" height="6" fill="#dedede"/><rect x="2700" y="84" width="4" height="6" fill="#dedede"/><rect x="2706" y="84" width="4" height="6" fill="#dedede"/><rect x="2712" y="84" width="4" height="6" fill="#dedede"/><rect x="2718" y="84" width="4" height="6" fill="#dedede"/><rect x="2724" y="84" width="4" height="6" fill="#dedede"/><rect x="2724" y="52" width="4" height="6" fill="#dedede"/><rect x="2688" y="92" width="4" height="6" fill="#dedede"/><rect x="2694" y="92" width="4" height="6" fill="#dedede"/><path d="M1242,490 L1256,497.5 L1242,505 L1228,497.5 Z" fill="#dcdcdc"/><path d="M1227.5,499.5 L1240.5,507 L1240.5,521 L1227.5,513.5 Z" fill="#dcdcdc"/><path d="M1243.5,507 L1256.5,499.5 L1256.5,513.5 L1243.5,521 Z" fill="#dcdcdc"/><circle cx="1258" cy="494.7" r="10.5" fill="#242424"/><circle cx="1258" cy="494.7" r="9" fill="#e6c000"/><circle cx="1242" cy="579" r="14.5" fill="none" stroke="#dcdcdc" stroke-width="3"/><circle cx="1242" cy="579" r="6.5" fill="none" stroke="#dcdcdc" stroke-width="3"/><rect x="1227" y="642" width="30" height="21" fill="none" stroke="#4b4b4b" stroke-width="2"/><rect x="1228" y="647" width="28" height="2" fill="#4b4b4b"/><rect x="1228" y="657" width="28" height="2" fill="#4b4b4b"/><circle cx="1231.5" cy="641.5" r="2" fill="#4b4b4b"/><circle cx="1231.5" cy="663.5" r="2" fill="#4b4b4b"/><circle cx="1252.5" cy="663.5" r="2" fill="#4b4b4b"/><ellipse cx="1236.5" cy="738.5" rx="6" ry="4.6" transform="rotate(-25 1236.5 738.5)" fill="#dcdcdc"/><rect x="1241" y="711" width="2.6" height="28" fill="#dcdcdc"/><path d="M1242,711 Q1243,716 1248,719 Q1254,724 1251.5,731 Q1252,724 1242.5,721 Z" fill="#dcdcdc"/><rect x="1226" y="785" width="6" height="5.5" fill="#dcdcdc"/><rect x="1252" y="785" width="6" height="5.5" fill="#dcdcdc"/><rect x="1226" y="794" width="6" height="5.5" fill="#dcdcdc"/><rect x="1252" y="794" width="6" height="5.5" fill="#dcdcdc"/><rect x="1226" y="803" width="6" height="5.5" fill="#dcdcdc"/><rect x="1252" y="803" width="6" height="5.5" fill="#dcdcdc"/><rect x="1226" y="812" width="6" height="5.5" fill="#dcdcdc"/><rect x="1252" y="812" width="6" height="5.5" fill="#dcdcdc"/><path d="M1237,793 L1249,801 L1237,809 Z" fill="#dcdcdc"/><rect x="1227" y="860" width="30" height="30" fill="none" stroke="#dcdcdc" stroke-width="2"/><circle cx="1232.5" cy="866.5" r="2.8" fill="#dcdcdc"/><path d="M1229,887.5 L1235.5,876.5 L1240,882 L1247.5,868.5 L1255,879 L1255,887.5 Z" fill="#dcdcdc"/><path d="M1276,890 L1262,904 L1276,918 Z" fill="#4b4b4b"/><path d="M1252,952 L1238,938 A5,5 0 0 0 1231,945 L1249,963 A3.5,3.5 0 0 0 1254,958 L1240,944 A1.8,1.8 0 0 0 1237,947 L1247,957" fill="none" stroke="#dcdcdc" stroke-width="2.2" stroke-linecap="butt"/><path d="M1249,1006.5 L1249,1039 A16,16 0 0 1 1233,1023 Q1233,1012 1249,1006.5 Z" fill="#dcdcdc"/><path d="M1249,1006.5 L1249,1039 A17,16.25 0 0 1 1232.5,1022.75 A17,16.25 0 0 1 1249,1006.5 Z" fill="#dcdcdc"/><rect x="1226" y="1020" width="8" height="6" fill="#dcdcdc"/><rect x="1248" y="1013.5" width="10" height="5" fill="#dcdcdc"/><rect x="1248" y="1028" width="10" height="5" fill="#dcdcdc"/><circle cx="1242" cy="1097" r="16" fill="#4b4b4b"/><text x="1242" y="1106" text-anchor="middle" fill="#242424" font-size="24" font-style="italic" font-weight="bold" font-family="Liberation Serif">v</text><circle cx="1242" cy="1171" r="16" fill="#4b4b4b"/><text x="1241" y="1181" text-anchor="middle" fill="#242424" font-size="26" font-style="italic" font-weight="bold" font-family="Liberation Serif">b</text><path d="M1242.0,1231.0 L1245.9,1241.7 L1257.2,1242.1 L1248.3,1249.0 L1251.4,1259.9 L1242.0,1253.6 L1232.6,1259.9 L1235.7,1249.0 L1226.8,1242.1 L1238.1,1241.7 Z" fill="#4b4b4b"/><path d="M1234.5,1711 L1234.5,1704 A7.5,7.5 0 0 1 1249.5,1704 L1249.5,1711" fill="none" stroke="#dcdcdc" stroke-width="4"/><rect x="1229" y="1710" width="26" height="18" rx="2" fill="#dcdcdc"/><circle cx="1242" cy="1716.5" r="3" fill="#242424"/><rect x="1240.5" y="1717" width="3" height="8" fill="#242424"/><path d="M1306,1726 L1291.5,1726 L1291.5,1698 L1319,1698 L1319,1714" fill="none" stroke="#4b4b4b" stroke-width="4"/><path d="M1305,1707 L1319,1719 L1313.5,1719.5 L1319,1726 L1316.5,1727.5 L1311.5,1721 L1307.5,1724 Z" fill="#4b4b4b"/><rect x="1381" y="1696" width="32.5" height="20.5" rx="2" fill="#dcdcdc"/><path d="M1386.5,1726.5 L1397,1717 L1407.5,1726.5" fill="none" stroke="#dcdcdc" stroke-width="3.5" stroke-linecap="round"/><rect x="1473.5" y="1698.5" width="22.5" height="18" fill="#dcdcdc"/><rect x="1481.5" y="1706.5" width="26.5" height="20.5" fill="#242424"/><rect x="1483.5" y="1708.5" width="22.5" height="16.5" fill="#dcdcdc"/><g stroke="#4b4b4b" stroke-width="2"><path d="M1571.5,1696 V1728 M1581,1696 V1728 M1590.5,1696 V1728 M1565,1702.7 H1597 M1565,1712.2 H1597 M1565,1721.7 H1597"/></g><path d="M1679,1714 L1667,1702 A5,5 0 0 0 1660,1709 L1675,1724 A3.5,3.5 0 0 0 1680,1719 L1668,1707 A1.8,1.8 0 0 0 1665,1710 L1674,1719" fill="none" stroke="#4b4b4b" stroke-width="2.2"/><rect x="1674.5" y="1701" width="15" height="4" fill="#4b4b4b"/><rect x="1680" y="1696" width="4" height="15" fill="#4b4b4b"/><path d="M1750.5,1721 L1766,1705.5 A9.5,9.5 0 0 1 1776.5,1696 L1771.5,1701 A4.2,4.2 0 0 0 1777,1706.5 L1782,1701.5 A9.5,9.5 0 0 1 1772.5,1712 L1757,1727.5 A4.6,4.6 0 0 1 1750.5,1721 Z" fill="#dcdcdc"/><circle cx="1754" cy="1724" r="1.6" fill="#242424"/><rect x="1841" y="1696" width="32" height="32" fill="#dcdcdc"/><rect x="1847.5" y="1696" width="5" height="21" fill="#242424"/><rect x="1861.5" y="1696" width="5" height="21" fill="#242424"/><rect x="1851" y="1717" width="2" height="11" fill="#242424"/><rect x="1862" y="1717" width="2" height="11" fill="#242424"/><rect x="1933" y="1696.5" width="5.5" height="5.5" fill="#dcdcdc"/><rect x="1933" y="1713" width="5.5" height="5.5" fill="#dcdcdc"/><rect x="1942" y="1696.5" width="5.5" height="5.5" fill="#dcdcdc"/><rect x="1942" y="1713" width="5.5" height="5.5" fill="#dcdcdc"/><rect x="1951" y="1696.5" width="5.5" height="5.5" fill="#dcdcdc"/><rect x="1951" y="1713" width="5.5" height="5.5" fill="#dcdcdc"/><rect x="1960" y="1696.5" width="5.5" height="5.5" fill="#dcdcdc"/><rect x="1960" y="1713" width="5.5" height="5.5" fill="#dcdcdc"/><rect x="1937.5" y="1705" width="5.5" height="5.5" fill="#dcdcdc"/><rect x="1946.5" y="1705" width="5.5" height="5.5" fill="#dcdcdc"/><rect x="1955.5" y="1705" width="5.5" height="5.5" fill="#dcdcdc"/><rect x="1936.5" y="1721.5" width="25.5" height="5.5" fill="#dcdcdc"/><circle cx="2764" cy="513" r="11" fill="none" stroke="#dcdcdc" stroke-width="3.5"/><circle cx="2768" cy="608" r="16" fill="#dcdcdc"/><text x="2765" y="619" fill="#242424" font-size="28" font-style="italic" font-weight="bold" font-family="Liberation Serif">i</text><rect x="2752" y="688" width="10" height="26" fill="#dcdcdc"/><rect x="2764" y="688" width="10" height="26" fill="#dcdcdc"/><rect x="2752" y="785" width="4" height="3" fill="#dcdcdc"/><rect x="2758" y="785" width="16" height="3" fill="#dcdcdc"/><rect x="2752" y="791" width="4" height="3" fill="#dcdcdc"/><rect x="2758" y="791" width="16" height="3" fill="#dcdcdc"/><rect x="2752" y="797" width="4" height="3" fill="#dcdcdc"/><rect x="2758" y="797" width="16" height="3" fill="#dcdcdc"/><rect x="2752" y="803" width="4" height="3" fill="#dcdcdc"/><rect x="2758" y="803" width="16" height="3" fill="#dcdcdc"/><rect x="2752" y="809" width="4" height="3" fill="#dcdcdc"/><rect x="2758" y="809" width="16" height="3" fill="#dcdcdc"/><path d="M2755,909 L2759,909 L2759,905 Q2759,903 2761,903 L2776,903 L2776,935 L2755,935 Q2752,935 2752,932 L2752,912 Q2752,909 2755,909 Z" fill="#dcdcdc"/><rect x="2755" y="912.5" width="5" height="2.2" fill="#242424"/><rect x="2755" y="918.0" width="5" height="2.2" fill="#242424"/><rect x="2755" y="923.5" width="5" height="2.2" fill="#242424"/><rect x="2755" y="929.0" width="5" height="2.2" fill="#242424"/><circle cx="2773" cy="922" r="8.5" fill="#242424"/><circle cx="2773" cy="922" r="4.5" fill="#dcdcdc"/><g fill="#4b4b4b"><rect x="2755" y="997" width="3.6" height="28"/><circle cx="2756.8" cy="1012" r="4.8"/><rect x="2766.2" y="997" width="3.6" height="28"/><circle cx="2768" cy="1005" r="4.8"/></g><rect x="2750" y="1458" width="14" height="47" fill="#4b4b4b"/><rect x="2750" y="1507.5" width="14" height="6" fill="#4b4b4b"/><rect x="2750" y="1515.5" width="14" height="6" fill="#4b4b4b"/><rect x="2750" y="1523.5" width="14" height="6" fill="#4b4b4b"/><rect x="2750" y="1531.5" width="14" height="6" fill="#4b4b4b"/><rect x="2750" y="1539.5" width="14" height="6" fill="#4b4b4b"/><rect x="2750" y="1547.5" width="14" height="6" fill="#4b4b4b"/><rect x="2750" y="1555.5" width="14" height="6" fill="#4b4b4b"/><rect x="2750" y="1563.5" width="14" height="6" fill="#4b4b4b"/><rect x="2750" y="1571.5" width="14" height="6" fill="#4b4b4b"/><rect x="2750" y="1579.5" width="14" height="6" fill="#4b4b4b"/><rect x="2750" y="1587.5" width="14" height="6" fill="#4b4b4b"/><rect x="2750" y="1595.5" width="14" height="6" fill="#4b4b4b"/><rect x="2750" y="1603.5" width="14" height="6" fill="#4b4b4b"/><rect x="2750" y="1611.5" width="14" height="6" fill="#4b4b4b"/><rect x="2750" y="1619.5" width="14" height="6" fill="#4b4b4b"/><rect x="2750" y="1627.5" width="14" height="6" fill="#4b4b4b"/><rect x="2750" y="1635.5" width="14" height="6" fill="#4b4b4b"/><rect x="2750" y="1643.5" width="14" height="6" fill="#4b4b4b"/><rect x="2750" y="1651.5" width="14" height="6" fill="#4b4b4b"/><rect x="2750" y="1659.5" width="14" height="6" fill="#4b4b4b"/><rect x="2750" y="1667.5" width="14" height="6" fill="#4b4b4b"/><circle cx="2769" cy="1513" r="10" fill="#1a1a1a" opacity="0.6"/><circle cx="2768" cy="1511.5" r="10" fill="#e0e0e0"/><circle cx="2733" cy="1712" r="18.5" fill="none" stroke="#4b4b4b" stroke-width="7"/><rect x="2731" y="1689" width="4" height="46" fill="#242424"/><rect x="2710" y="1710" width="46" height="4" fill="#242424"/><path d="M2728.5,1703 L2742,1711.5 L2728.5,1720 Z" fill="#dcdcdc"/></svg>
</body></html>
